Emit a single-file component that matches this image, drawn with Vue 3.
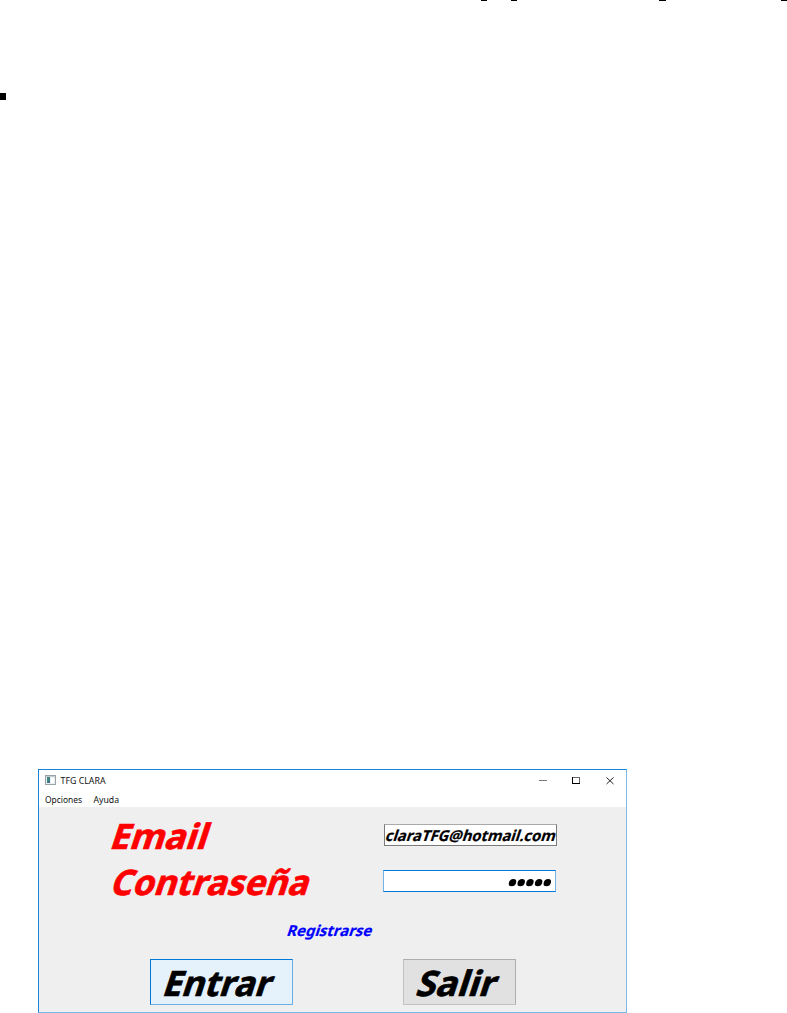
<script setup>
const marks = [
  { x: 481, w: 6 },
  { x: 511, w: 6 },
  { x: 659, w: 7 },
  { x: 781, w: 6 },
]
</script>

<template>
  <main class="page">
    <svg class="marks" width="787" height="100" shape-rendering="crispEdges">
      <rect v-for="m in marks" :key="m.x" :x="m.x" y="0" :width="m.w" height="1" />
      <rect x="0" y="93" width="6" height="7" />
    </svg>

    <section class="window">
      <header class="titlebar">
        <svg class="app-icon" width="12" height="11">
          <rect x="0.5" y="0.5" width="10" height="9" fill="#e9eef0" stroke="#9aa2a6" />
          <rect x="1" y="1" width="9" height="1" fill="#c5cdd1" />
          <rect x="2" y="2" width="3" height="6" fill="#3f8580" />
          <rect x="3" y="6" width="2" height="2" fill="#4c6d9b" />
          <rect x="6" y="3" width="3" height="5" fill="#fff" />
        </svg>
        <svg class="title" width="60" height="20"><text x="-0.5" y="14" textLength="45" lengthAdjust="spacingAndGlyphs">TFG CLARA</text></svg>
        <svg class="controls" width="80" height="20">
          <path d="M3 10.5h8" stroke="#777" fill="none" />
          <g shape-rendering="crispEdges">
            <rect x="36.5" y="7.5" width="7" height="6" stroke="#000" fill="none" />
            <path d="M37 7.5h7M43.5 8v5" stroke="#666" fill="none" />
          </g>
          <path d="M70.5 7.5l7 6.5M77.5 7.5l-7 6.5" stroke="#222" fill="none" />
        </svg>
      </header>
      <nav class="menu">
        <svg width="48" height="17"><text x="0" y="12" textLength="37" lengthAdjust="spacingAndGlyphs">Opciones</text></svg>
        <svg width="40" height="17"><text x="0.5" y="12" textLength="25.5" lengthAdjust="spacingAndGlyphs">Ayuda</text></svg>
      </nav>

      <form class="body" @submit.prevent>
        <div class="row first">
          <svg class="label" width="240" height="46"><g transform="translate(-1.5 32) skewX(-18)"><text textLength="97" lengthAdjust="spacingAndGlyphs">Email</text></g></svg>
          <div class="field email">
            <svg width="171" height="20"><g transform="translate(-0.5 16) skewX(-18)"><text textLength="170" lengthAdjust="spacingAndGlyphs">claraTFG@hotmail.com</text></g></svg>
          </div>
        </div>
        <div class="row">
          <svg class="label" width="240" height="46"><g transform="translate(-1 32) skewX(-18)"><text textLength="198" lengthAdjust="spacingAndGlyphs">Contraseña</text></g></svg>
          <div class="field password">
            <svg width="171" height="20">
              <g transform="translate(0 11.7) skewX(-14)">
                <circle v-for="i in 5" :key="i" :cx="119.8 + i * 8.7" cy="0" r="3.6" />
              </g>
            </svg>
          </div>
        </div>
        <div class="register">
          <svg width="100" height="24"><g transform="translate(0 16) skewX(-18)"><text textLength="85" lengthAdjust="spacingAndGlyphs">Registrarse</text></g></svg>
        </div>
        <div class="actions">
          <button class="enter" type="button">
            <svg width="141" height="44"><g transform="translate(10 36) skewX(-18)"><text textLength="108" lengthAdjust="spacingAndGlyphs">Entrar</text></g></svg>
          </button>
          <button class="exit" type="button">
            <svg width="111" height="44"><g transform="translate(10.5 36) skewX(-18)"><text textLength="79" lengthAdjust="spacingAndGlyphs">Salir</text></g></svg>
          </button>
        </div>
      </form>
    </section>
  </main>
</template>

<style>
body { background: #fff; overflow: hidden; }
</style>

<style scoped>
.page { width: 787px; height: 1013px; overflow: hidden; font-family: "Noto Sans", "Open Sans", sans-serif; }
svg { display: block; flex: none; overflow: visible; }
.marks { margin-bottom: 669px; }
.window { box-sizing: border-box; width: 589px; height: 244px; margin-left: 38px; background: #fff; border: 1px solid #1883d7; border-right-color: #7db9e8; border-bottom-color: #7db9e8; }
.titlebar { display: flex; height: 21px; }
.titlebar text, .menu text { font-size: 9px; fill: #111; }
.app-icon { margin: 5px 4px 0 6px; }
.title { margin-right: auto; }
.controls { margin-right: 10px; }
.menu { display: flex; height: 16px; padding-left: 6px; }
.body { height: 205px; background: #efefef; font-weight: bold; }
.row { display: flex; height: 46px; }
.first { padding-top: 10px; }
.label { margin-left: 71px; font-size: 35px; fill: #f00; stroke: #f00; stroke-width: 0.7px; }
.field { box-sizing: border-box; width: 173px; height: 22px; background: #fff; border: 1px solid #7a7a7a; font-size: 15px; }
.email { margin: 7px 0 0 34px; border-top-color: #aaa; }
.password { margin: 7px 0 0 33px; border-color: #0078d7; border-left-color: #73b2e6; border-right-color: #73b2e6; }
.email text { stroke: #000; stroke-width: 0.2px; }
.register { height: 50px; padding: 11px 0 0 247px; box-sizing: border-box; font-size: 15px; fill: #00f; stroke: #00f; stroke-width: 0.2px; }
.actions { display: flex; margin-left: 111px; gap: 110px; }
button { box-sizing: border-box; padding: 0; height: 46px; font: bold 35px "Noto Sans", sans-serif; }
button text { stroke: #000; stroke-width: 0.7px; }
.enter { width: 143px; background: #e5f1fb; border: 1px solid #0078d7; border-right-color: #66aee7; border-bottom-color: #66aee7; }
.exit { width: 113px; background: #e1e1e1; border: 1px solid #adadad; border-left-color: #c2c2c2; border-bottom-color: #c2c2c2; }
</style>
